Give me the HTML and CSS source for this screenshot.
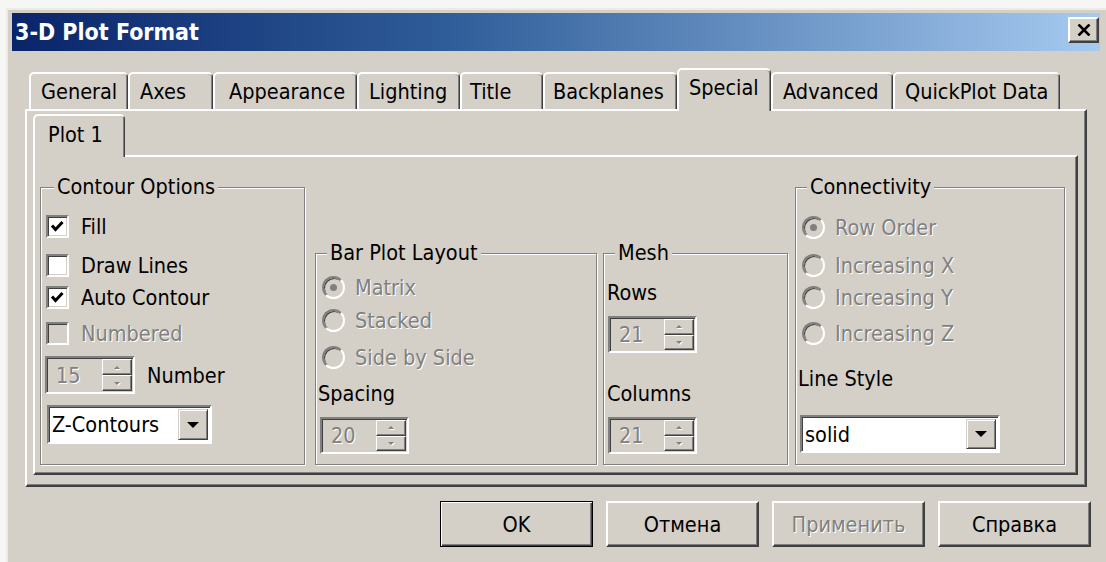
FILE: index.html
```html
<!DOCTYPE html>
<html lang="en">
<head>
<meta charset="utf-8">
<title>3-D Plot Format</title>
<link rel="stylesheet" href="styles.css">
</head>
<body>
<div class="window">
  <div class="titlebar">
    <span class="title">3-D Plot Format</span>
    <button class="close" type="button" aria-label="Close">
      <svg width="14" height="12" viewBox="0 0 14 12"><path d="M1.5 0.5 L12.5 11.5 M12.5 0.5 L1.5 11.5" stroke="#000" stroke-width="2.6" fill="none"/></svg>
    </button>
  </div>

  <div class="dialog">
    <div class="tabs">
      <div class="tab w-general">General</div>
      <div class="tab w-axes">Axes</div>
      <div class="tab w-appearance">Appearance</div>
      <div class="tab w-lighting">Lighting</div>
      <div class="tab w-title">Title</div>
      <div class="tab w-backplanes">Backplanes</div>
      <div class="tab active w-special">Special</div>
      <div class="tab w-advanced">Advanced</div>
      <div class="tab w-quickplot">QuickPlot Data</div>
    </div>

    <div class="panel">
      <div class="subtabs">
        <div class="tab active subtab">Plot 1</div>
      </div>

      <div class="subpanel">
        <!-- Contour Options -->
        <div class="group contour">
          <span class="group-title">Contour Options</span>
          <div class="row mt-23"><span class="check on"><svg width="19" height="19" viewBox="0 0 19 19"><path d="M4 8.5 L7.5 12.5 L14.5 5" stroke="#000" stroke-width="3" fill="none"/></svg></span><span class="label">Fill</span></div>
          <div class="row mt-9"><span class="check"></span><span class="label">Draw Lines</span></div>
          <div class="row mt-2"><span class="check on"><svg width="19" height="19" viewBox="0 0 19 19"><path d="M4 8.5 L7.5 12.5 L14.5 5" stroke="#000" stroke-width="3" fill="none"/></svg></span><span class="label">Auto Contour</span></div>
          <div class="row mt-6"><span class="check disabled"></span><span class="label dim">Numbered</span></div>
          <div class="row spin-row mt-12">
            <div class="spin big"><span class="dim">15</span><span class="spin-btns"><span class="spin-btn"><i class="arr up"></i></span><span class="spin-btn"><i class="arr down"></i></span></span></div>
            <span class="spin-label">Number</span>
          </div>
          <div class="combo z-combo mt-15"><span class="combo-text">Z-Contours</span><span class="drop"><i class="tri"></i></span></div>
        </div>

        <!-- Bar Plot Layout -->
        <div class="group short bar">
          <span class="group-title">Bar Plot Layout</span>
          <div class="row mt-18"><span class="radio sel"></span><span class="rlabel dim">Matrix</span></div>
          <div class="row mt-3"><span class="radio"></span><span class="rlabel dim">Stacked</span></div>
          <div class="row mt-7"><span class="radio"></span><span class="rlabel dim">Side by Side</span></div>
          <div class="row mt-6 text-row">Spacing</div>
          <div class="spin mt-9"><span class="dim">20</span><span class="spin-btns"><span class="spin-btn"><i class="arr up"></i></span><span class="spin-btn"><i class="arr down"></i></span></span></div>
        </div>

        <!-- Mesh -->
        <div class="group short mesh">
          <span class="group-title">Mesh</span>
          <div class="row mt-23 text-row">Rows</div>
          <div class="spin mt-9"><span class="dim">21</span><span class="spin-btns"><span class="spin-btn"><i class="arr up"></i></span><span class="spin-btn"><i class="arr down"></i></span></span></div>
          <div class="row mt-25 text-row">Columns</div>
          <div class="spin mt-9"><span class="dim">21</span><span class="spin-btns"><span class="spin-btn"><i class="arr up"></i></span><span class="spin-btn"><i class="arr down"></i></span></span></div>
        </div>

        <!-- Connectivity -->
        <div class="group conn">
          <span class="group-title">Connectivity</span>
          <div class="row mt-24"><span class="radio sel"></span><span class="rlabel dim">Row Order</span></div>
          <div class="row mt-8"><span class="radio"></span><span class="rlabel dim">Increasing X</span></div>
          <div class="row mt-2"><span class="radio"></span><span class="rlabel dim">Increasing Y</span></div>
          <div class="row mt-6"><span class="radio"></span><span class="rlabel dim">Increasing Z</span></div>
          <div class="row mt-15 text-row">Line Style</div>
          <div class="combo line-combo mt-22"><span class="combo-text">solid</span><span class="drop"><i class="tri"></i></span></div>
        </div>
      </div>
    </div>

    <div class="buttons">
      <button class="btn default" type="button">OK</button>
      <button class="btn" type="button">Отмена</button>
      <button class="btn" type="button" disabled><span class="dim">Применить</span></button>
      <button class="btn" type="button">Справка</button>
    </div>
  </div>
</div>
</body>
</html>
```

FILE: styles.css
```css
* { box-sizing: border-box; }

html, body { margin: 0; padding: 0; }

body {
  width: 1106px;
  height: 562px;
  overflow: hidden;
  background: #f6f6f4;
  font-family: "DejaVu Sans Condensed", "DejaVu Sans", sans-serif;
  font-stretch: condensed;
  font-size: 21.5px;
  color: #000;
}

/* window frame */
.window {
  margin: 8px 0 0 6px;
  width: 1100px;
  height: 554px;
  background: #d4d0c8;
  border-top: 2px solid #ecebe6;
  border-left: 2px solid #ecebe6;
  padding: 3px 6px 0 4px;
}

.titlebar {
  height: 38px;
  display: flex;
  align-items: flex-start;
  justify-content: space-between;
  padding-left: 3px;
  background: linear-gradient(to right, #0a246a 0%, #2f5d99 40%, #a6caf0 100%);
}

.title {
  color: #fff;
  font-weight: bold;
  font-size: 23px;
  line-height: 38px;
}

.close {
  width: 31px;
  height: 26px;
  margin: 4px 1px 0 0;
  padding: 0;
  background: #d4d0c8;
  border: 2px solid;
  border-color: #fff #404040 #404040 #fff;
  box-shadow: inset -1px -1px 0 #808080;
  display: flex;
  align-items: center;
  justify-content: center;
}

.dialog {
  padding: 17px 9px 0 13px;
}

/* tab strip */
.tabs {
  display: flex;
  align-items: flex-end;
  height: 41px;
  padding-left: 4px;
  position: relative;
  z-index: 1;
}

.tab {
  height: 37px;
  border-style: solid;
  border-width: 2px 1px 0 2px;
  border-color: #fff #404040 transparent #fff;
  border-radius: 5px 5px 0 0;
  box-shadow: inset -1px 0 0 #808080;
  background: #d4d0c8;
  padding-left: 10px;
  line-height: 36px;
  white-space: nowrap;
}

.tab.active {
  height: 43px;
  margin-bottom: -2px;
}

.w-general { width: 99px; }
.w-axes { width: 85px; }
.w-appearance { width: 144px; padding-left: 14px; }
.w-lighting { width: 103px; }
.w-title { width: 83px; padding-left: 8px; }
.w-backplanes { width: 134px; padding-left: 8px; }
.w-special { width: 94px; }
.w-advanced { width: 122px; }
.w-quickplot { width: 167px; }

/* outer tab page */
.panel {
  margin-right: 4px;
  height: 378px;
  border: 2px solid;
  border-color: #fff #404040 #404040 #fff;
  box-shadow: inset -1px -1px 0 #808080;
  padding: 2px 7px 10px 6px;
}

.subtabs {
  display: flex;
  align-items: flex-end;
  height: 42px;
  position: relative;
  z-index: 1;
}

.subtab {
  width: 92px;
  height: 44px;
  padding-left: 13px;
  line-height: 38px;
}

.subpanel {
  height: 320px;
  border: 2px solid;
  border-color: #fff #404040 #404040 #fff;
  box-shadow: inset -1px -1px 0 #808080;
  display: flex;
  align-items: flex-end;
  padding: 0 11px 8px 5px;
}

/* etched group boxes */
.group {
  position: relative;
  display: flex;
  flex-direction: column;
  align-items: flex-start;
  border: 1px solid #808080;
  box-shadow: 1px 1px 0 #fff, inset 1px 1px 0 #fff;
  padding: 0 0 0 4px;
  height: 278px;
}

.group.short { height: 212px; }

.contour { width: 265px; }
.bar { width: 282px; margin-left: 10px; }
.mesh { width: 185px; margin-left: 6px; }
.conn { width: 270px; margin-left: 7px; }

.group-title {
  position: absolute;
  top: -14px;
  left: 11px;
  padding: 0 3px;
  background: #d4d0c8;
  line-height: 26px;
  white-space: nowrap;
}

.contour .group-title { left: 13px; }

.row {
  display: flex;
  align-items: center;
  height: 30px;
  white-space: nowrap;
}

.text-row { margin-left: -2px; }
.mesh .text-row { margin-left: -1px; }

.mt-2 { margin-top: 2px; }
.mt-3 { margin-top: 3px; }
.mt-6 { margin-top: 6px; }
.mt-7 { margin-top: 7px; }
.mt-8 { margin-top: 8px; }
.mt-9 { margin-top: 9px; }
.mt-12 { margin-top: 12px; }
.mt-15 { margin-top: 15px; }
.mt-18 { margin-top: 18px; }
.mt-22 { margin-top: 22px; }
.mt-23 { margin-top: 23px; }
.mt-24 { margin-top: 24px; }
.mt-25 { margin-top: 25px; }

.dim {
  color: #808080;
  text-shadow: 1px 1px 0 #fff;
}

/* check boxes */
.check {
  width: 23px;
  height: 23px;
  margin-left: 1px;
  flex: none;
  border: 2px solid;
  border-color: #808080 #fff #fff #808080;
  box-shadow: inset 1px 1px 0 #404040, inset -1px -1px 0 #d4d0c8;
  background: #fff;
  display: flex;
}

.check.disabled { background: #d4d0c8; }

.label { margin-left: 12px; }

/* radio buttons */
.radio {
  width: 23px;
  height: 23px;
  margin-left: 2px;
  flex: none;
  border-radius: 50%;
  border: 2px solid;
  border-color: #808080 #fff #fff #808080;
  box-shadow: inset 1px 1px 0 #404040;
  background: #d4d0c8;
  position: relative;
}

.radio.sel::after {
  content: "";
  position: absolute;
  left: 6px;
  top: 6px;
  width: 7px;
  height: 7px;
  border-radius: 50%;
  background: #808080;
}

.rlabel { margin-left: 10px; }

/* spin edits */
.spin {
  width: 89px;
  height: 37px;
  flex: none;
  display: flex;
  align-items: center;
  justify-content: space-between;
  border: 2px solid;
  border-color: #808080 #fff #fff #808080;
  box-shadow: inset 1px 1px 0 #404040;
  background: #d4d0c8;
  padding: 1px 1px 1px 9px;
}

.spin.big { width: 90px; height: 38px; }

.spin-btns {
  width: 30px;
  height: 100%;
  display: flex;
  flex-direction: column;
}

.spin-btn {
  flex: 1;
  border: 1px solid;
  border-color: #fff #404040 #404040 #fff;
  box-shadow: inset -1px -1px 0 #808080;
  display: flex;
  align-items: center;
  justify-content: center;
}

.arr {
  width: 0;
  height: 0;
  border-left: 3px solid transparent;
  border-right: 3px solid transparent;
  filter: drop-shadow(1px 1px 0 #fff);
}

.arr.up { border-bottom: 3px solid #808080; }
.arr.down { border-top: 3px solid #808080; }

.spin-label { margin-left: 12px; }

/* drop-down lists */
.combo {
  height: 39px;
  flex: none;
  display: flex;
  align-items: center;
  justify-content: space-between;
  border: 2px solid;
  border-color: #808080 #fff #fff #808080;
  box-shadow: inset 1px 1px 0 #404040;
  background: #fff;
  padding: 2px 2px 2px 3px;
}

.z-combo { width: 165px; margin-left: 2px; }
.line-combo { width: 200px; height: 38px; }

.drop {
  width: 30px;
  height: 100%;
  background: #d4d0c8;
  border: 1px solid;
  border-color: #d4d0c8 #404040 #404040 #d4d0c8;
  box-shadow: inset 1px 1px 0 #fff, inset -1px -1px 0 #808080;
  display: flex;
  align-items: center;
  justify-content: center;
}

.tri {
  width: 0;
  height: 0;
  border-left: 6px solid transparent;
  border-right: 6px solid transparent;
  border-top: 6px solid #000;
}

/* dialog buttons */
.buttons {
  display: flex;
  justify-content: flex-end;
  gap: 13px;
  margin-top: 14px;
}

.btn {
  width: 153px;
  height: 46px;
  padding: 0;
  font: inherit;
  color: #000;
  background: #d4d0c8;
  border: 2px solid;
  border-color: #fff #404040 #404040 #fff;
  box-shadow: inset -1px -1px 0 #808080;
}

.btn.default {
  border: 1px solid #000;
  box-shadow: inset 1px 1px 0 #fff, inset -1px -1px 0 #404040, inset -2px -2px 0 #808080;
}
```
